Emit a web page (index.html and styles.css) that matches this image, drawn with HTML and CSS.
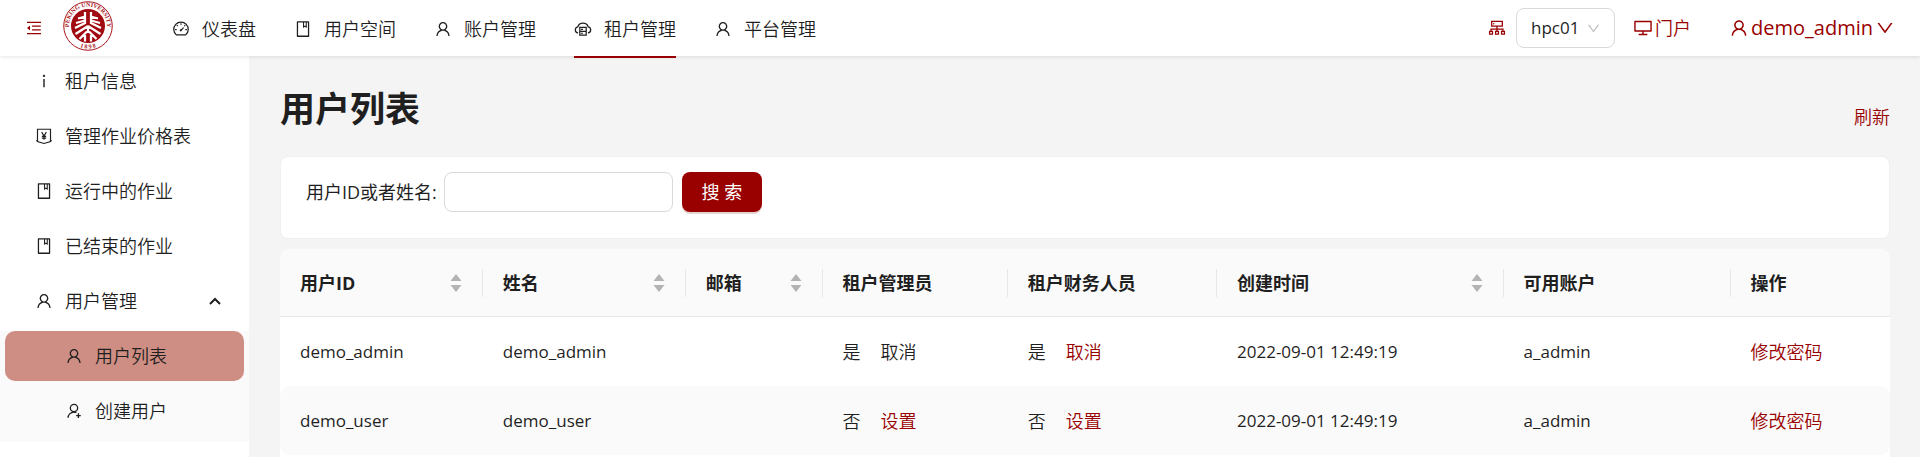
FILE: index.html
```html
<!DOCTYPE html>
<html lang="zh-CN">
<head>
<meta charset="utf-8">
<title>用户列表</title>
<link rel="stylesheet" href="styles.css">
</head>
<body>
<svg class="sprite" aria-hidden="true">
  <symbol id="user" viewBox="0 0 1024 1024"><path d="M858.500 763.600a374 374 0 00-80.600-119.500 375.630 375.630 0 00-119.500-80.600c-.4-.2-.8-.3-1.200-.5C719.500 518 760 444.700 760 362c0-137-111-248-248-248S264 225 264 362c0 82.700 40.500 156 102.800 201.100-.4.2-.8.3-1.200.5-44.800 18.900-85 46-119.500 80.600a375.630 375.630 0 00-80.600 119.500A371.700 371.700 0 00136 901.800a8 8 0 008 8.200h60c4.400 0 7.900-3.500 8-7.800 2-77.200 33-149.500 87.800-204.300 56.700-56.700 132-87.900 212.200-87.900s155.500 31.200 212.200 87.900C779 752.700 810 825 812 902.200c.1 4.400 3.600 7.800 8 7.800h60a8 8 0 008-8.200c-1-47.800-10.900-94.300-29.500-138.200zM512 534c-45.900 0-89.100-17.900-121.600-50.400S340 407.900 340 362c0-45.900 17.900-89.100 50.400-121.600S466.100 190 512 190s89.100 17.900 121.600 50.400S684 316.100 684 362c0 45.900-17.900 89.100-50.400 121.600S557.900 534 512 534z"/></symbol>
  <symbol id="user-add" viewBox="0 0 1024 1024"><g fill="none" stroke="currentColor" stroke-width="76"><circle cx="512" cy="342" r="208"/><path d="M174 900c4-160 130-328 338-328 50 0 96 10 138 28"/><path d="M764 640v264M632 772h264"/></g></symbol>
  <symbol id="book" viewBox="0 0 1024 1024"><path d="M832 64H192c-17.700 0-32 14.300-32 32v832c0 17.700 14.300 32 32 32h640c17.700 0 32-14.300 32-32V96c0-17.700-14.300-32-32-32zm-260 72h96v209.900L621.500 312 572 347.400V136zm220 752H232V136h280v296.900c0 3.300 1 6.600 3 9.300a15.900 15.900 0 0022.300 3.700l83.800-59.900 81.400 59.400c2.700 2 6 3.100 9.400 3.100 8.800 0 16-7.200 16-16V136h64v752z"/></symbol>
  <symbol id="down" viewBox="0 0 1024 1024"><path d="M884 256h-75c-5.100 0-9.900 2.500-12.900 6.600L512 654.200 227.900 262.600c-3-4.100-7.800-6.600-12.900-6.600h-75c-6.500 0-10.300 7.400-6.500 12.700l352.600 486.100c12.800 17.600 39 17.600 51.700 0l352.600-486.100c3.900-5.300.1-12.700-6.400-12.700z"/></symbol>
  <symbol id="desktop" viewBox="0 0 1024 1024"><path d="M928 140H96c-17.700 0-32 14.300-32 32v496c0 17.700 14.300 32 32 32h380v112H304c-8.800 0-16 7.200-16 16v48c0 4.400 3.600 8 8 8h432c4.400 0 8-3.600 8-8v-48c0-8.800-7.200-16-16-16H548V700h380c17.700 0 32-14.300 32-32V172c0-17.700-14.300-32-32-32zm-40 488H136V212h752v416z"/></symbol>
  <symbol id="fold" viewBox="0 0 1024 1024"><path d="M408 442h480c4.400 0 8-3.600 8-8v-56c0-4.400-3.600-8-8-8H408c-4.400 0-8 3.600-8 8v56c0 4.400 3.600 8 8 8zm-8 204c0 4.400 3.600 8 8 8h480c4.400 0 8-3.600 8-8v-56c0-4.400-3.600-8-8-8H408c-4.400 0-8 3.600-8 8v56zm504-486H120c-4.400 0-8 3.600-8 8v56c0 4.400 3.600 8 8 8h784c4.400 0 8-3.600 8-8v-56c0-4.400-3.600-8-8-8zm0 632H120c-4.400 0-8 3.600-8 8v56c0 4.400 3.600 8 8 8h784c4.400 0 8-3.600 8-8v-56c0-4.400-3.600-8-8-8zM115.400 518.900L271.700 642c5.800 4.600 14.400.5 14.400-6.900V388.900c0-7.400-8.500-11.500-14.400-6.900L115.400 505.100a8.740 8.740 0 000 13.800z"/></symbol>
  <symbol id="info" viewBox="0 0 1024 1024"><path d="M448 224a64 64 0 10128 0 64 64 0 10-128 0zm96 168h-64c-4.400 0-8 3.600-8 8v464c0 4.400 3.600 8 8 8h64c4.400 0 8-3.600 8-8V400c0-4.400-3.600-8-8-8z"/></symbol>
  <symbol id="dashboard" viewBox="0 0 1024 1024"><g fill="none" stroke="currentColor" stroke-width="72"><path d="M246 846A412 412 0 1 1 778 846z" stroke-linejoin="round"/><path d="M512 190v90M271 290l62 62M753 290l-62 62M176 548h90M758 548h90" stroke-width="60"/><path d="M500 590L660 432"/></g><circle cx="500" cy="590" r="62"/></symbol>
  <symbol id="cloud" viewBox="0 0 1024 1024"><g fill="none" stroke="currentColor" stroke-width="72"><path d="M230 728C140 716 76 646 76 562c0-84 54-150 136-166C256 270 370 180 512 180s256 90 300 216c82 16 136 82 136 166 0 84-64 154-154 166"/><path d="M330 420h364v444H330zM330 642h364"/></g><path d="M400 504h110v60H400zM400 726h110v60H400z"/></symbol>
  <symbol id="money" viewBox="0 0 1024 1024"><g fill="none" stroke="currentColor" stroke-width="66"><path d="M64 780h78V128h740v652h78"/><path d="M142 780v48l370 108 370-108v-48"/><path d="M380 290l132 230 132-230M512 520v210M390 530h244M390 630h244"/></g></symbol>
  <symbol id="cluster" viewBox="0 0 1024 1024"><g fill="none" stroke="currentColor" stroke-width="72"><path d="M210 136h604v270H210zM512 406v290M172 710V578h680v132"/><path d="M90 710h164v150H90zM430 710h164v150H430zM770 710h164v150H770z"/></g><circle cx="330" cy="271" r="40"/></symbol>
  <symbol id="sorter" viewBox="0 0 12 18"><path d="M6 0l5.500 7H.5zM6 18l5.500-7H.5z"/></symbol>
</svg>

<header class="topbar">
  <button class="icon-button" type="button" aria-label="收起菜单"><svg class="icon"><use href="#fold"/></svg></button>
  <a class="logo" href="#" aria-label="首页">
    <svg viewBox="0 0 100 100">
      <defs>
        <path id="arc-top" d="M16 66A38 38 0 1 1 84 66"/>
        <path id="arc-bottom" d="M18 82A46 46 0 0 0 82 82"/>
      </defs>
      <circle cx="50" cy="50" r="48.500" fill="#fff" stroke="#a8151b" stroke-width="2"/>
      <circle cx="50" cy="50" r="34" fill="#a00a10"/>
      <text class="seal-text"><textPath href="#arc-top" startOffset="50%">PEKING UNIVERSITY</textPath></text>
      <text class="seal-text"><textPath href="#arc-bottom" startOffset="50%">1 8 9 8</textPath></text>
      <g fill="none" stroke="#fff" stroke-width="4.500">
        <path d="M44 22v22L24 54M56 22v22l20 10M45 31L30 35M55 31l15 4M44 39L26 44M56 39l18 5"/>
        <path d="M50 50L25 66M50 50l25 16M50 59L33 76M50 59l17 17M50 50v14M44 68v13M56 68v13"/>
      </g>
    </svg>
  </a>
  <nav class="nav" aria-label="主导航">
    <a class="nav-item" href="#"><svg class="icon"><use href="#dashboard"/></svg>仪表盘</a>
    <a class="nav-item" href="#"><svg class="icon"><use href="#book"/></svg>用户空间</a>
    <a class="nav-item" href="#"><svg class="icon"><use href="#user"/></svg>账户管理</a>
    <a class="nav-item nav-item-active" href="#" aria-current="page"><svg class="icon"><use href="#cloud"/></svg>租户管理</a>
    <a class="nav-item" href="#"><svg class="icon"><use href="#user"/></svg>平台管理</a>
  </nav>
  <div class="tools">
    <svg class="icon"><use href="#cluster"/></svg>
    <div class="cluster-select">
      <select aria-label="集群"><option>hpc01</option></select>
      <svg class="select-arrow"><use href="#down"/></svg>
    </div>
    <a class="portal" href="#"><svg class="icon-large"><use href="#desktop"/></svg>门户</a>
    <button class="account" type="button"><svg class="icon-large"><use href="#user"/></svg>demo_admin<svg class="icon-large"><use href="#down"/></svg></button>
  </div>
</header>

<div class="layout">
  <nav class="sidebar" aria-label="租户管理">
    <a class="side-item" href="#"><svg class="icon"><use href="#info"/></svg>租户信息</a>
    <a class="side-item" href="#"><svg class="icon"><use href="#money"/></svg>管理作业价格表</a>
    <a class="side-item" href="#"><svg class="icon"><use href="#book"/></svg>运行中的作业</a>
    <a class="side-item" href="#"><svg class="icon"><use href="#book"/></svg>已结束的作业</a>
    <button class="side-item" type="button" aria-expanded="true"><svg class="icon"><use href="#user"/></svg>用户管理
      <svg class="chevron" viewBox="0 0 12 8"><path d="M1 7l5-5 5 5"/></svg></button>
    <div class="submenu">
      <a class="side-item side-item-active" href="#" aria-current="page"><svg class="icon"><use href="#user"/></svg>用户列表</a>
      <a class="side-item" href="#"><svg class="icon"><use href="#user-add"/></svg>创建用户</a>
    </div>
  </nav>

  <main class="content">
    <div class="title-row">
      <h1>用户列表</h1>
      <a class="link" href="#">刷新</a>
    </div>
    <form class="filter">
      <label for="keyword">用户ID或者姓名:</label>
      <input id="keyword" type="text">
      <button class="primary" type="button">搜 索</button>
    </form>
    <div class="table-card">
      <table>
        <colgroup>
          <col class="col-id"><col class="col-name"><col class="col-mail"><col class="col-admin">
          <col class="col-finance"><col class="col-time"><col class="col-account"><col class="col-action">
        </colgroup>
        <thead>
          <tr>
            <th><div class="head">用户ID<svg class="sorter"><use href="#sorter"/></svg></div></th>
            <th><div class="head">姓名<svg class="sorter"><use href="#sorter"/></svg></div></th>
            <th><div class="head">邮箱<svg class="sorter"><use href="#sorter"/></svg></div></th>
            <th><div class="head">租户管理员</div></th>
            <th><div class="head">租户财务人员</div></th>
            <th><div class="head">创建时间<svg class="sorter"><use href="#sorter"/></svg></div></th>
            <th><div class="head">可用账户</div></th>
            <th><div class="head">操作</div></th>
          </tr>
        </thead>
        <tbody>
          <tr>
            <td class="latin">demo_admin</td><td class="latin">demo_admin</td><td></td>
            <td><div class="role">是<span>取消</span></div></td>
            <td><div class="role">是<a class="link" href="#">取消</a></div></td>
            <td class="latin">2022-09-01 12:49:19</td><td class="latin">a_admin</td>
            <td><a class="link" href="#">修改密码</a></td>
          </tr>
          <tr>
            <td class="latin">demo_user</td><td class="latin">demo_user</td><td></td>
            <td><div class="role">否<a class="link" href="#">设置</a></div></td>
            <td><div class="role">否<a class="link" href="#">设置</a></div></td>
            <td class="latin">2022-09-01 12:49:19</td><td class="latin">a_admin</td>
            <td><a class="link" href="#">修改密码</a></td>
          </tr>
        </tbody>
      </table>
    </div>
  </main>
</div>
</body>
</html>
```
FILE: styles.css
```css
* { box-sizing: border-box; }

body {
  margin: 0;
  min-height: 100vh;
  display: flex;
  flex-direction: column;
  background: #f4f4f4;
  color: #1f1f1f;
  font-family: "Open Sans", "Noto Sans CJK SC", sans-serif;
  font-size: 18px;
  font-weight: 350;
  line-height: 28px;
}

a { color: inherit; text-decoration: none; }

button, input, select {
  font: inherit;
  color: inherit;
  border: 0;
  background: none;
  padding: 0;
}

.sprite { position: absolute; width: 0; height: 0; }

.icon, .icon-large { width: 18px; height: 18px; flex: none; fill: currentColor; }
.icon-large { width: 20px; height: 20px; }

.link, .icon-button, .tools { color: #900; }

/* Top bar */
.topbar {
  position: relative;
  display: flex;
  align-items: center;
  height: 56px;
  padding: 0 25px;
  background: #fff;
  box-shadow: 0 1px 4px rgba(0, 0, 0, .1);
}

.icon-button { display: flex; }
.logo { display: flex; margin: 0 59px 4px 20px; }
.logo svg { width: 50px; height: 50px; }

.seal-text {
  font-family: "Liberation Serif", serif;
  font-size: 12px;
  font-weight: 700;
  fill: #a8151b;
  text-anchor: middle;
}

.nav { display: flex; gap: 38px; height: 100%; }
.nav-item { display: flex; align-items: center; gap: 12px; padding-top: 2px; }
.nav-item-active { height: 58px; border-bottom: 2px solid #900; }

.tools { display: flex; align-items: center; margin-left: auto; }

.cluster-select { position: relative; margin: 0 18px 0 10px; color: #1f1f1f; }
.cluster-select select {
  appearance: none;
  width: 99px;
  height: 40px;
  padding-left: 14px;
  border: 1px solid #d9d9d9;
  border-radius: 8px;
  background: #fff;
  font-size: 17px;
  font-weight: 400;
}
.select-arrow {
  position: absolute;
  top: 13px;
  right: 14px;
  width: 15px;
  height: 15px;
  fill: #bfbfbf;
  pointer-events: none;
}

.portal { display: flex; align-items: center; gap: 2px; }
.account { display: flex; align-items: center; gap: 2px; margin-left: 38px; font-size: 20px; font-weight: 400; }

/* Sidebar */
.layout { display: flex; flex: 1; }

.sidebar { flex: none; width: 249px; background: #fff; }

.side-item {
  display: flex;
  align-items: center;
  gap: 12px;
  width: 239px;
  height: 50px;
  margin: 0 5px 5px;
  padding: 0 23px 0 30px;
  border-radius: 10px;
}
.submenu { background: #fafafa; padding-bottom: 1px; }
.submenu .side-item { padding-left: 60px; }
.submenu .side-item-active { background: #cf8e83; }

.chevron { width: 12px; height: 8px; margin-left: auto; fill: none; stroke: #1f1f1f; stroke-width: 2; }

/* Content */
.content {
  display: flex;
  flex: 1;
  flex-direction: column;
  min-width: 0;
  padding: 31px 30px 0 31px;
}

.title-row { display: flex; justify-content: space-between; align-items: flex-end; margin-bottom: 25px; }
h1 { margin: 0; font-size: 35px; font-weight: 700; line-height: 44px; }

.filter {
  display: flex;
  align-items: center;
  margin-bottom: 10px;
  padding: 15px 25px 26px;
  background: #fff;
  border: 1px solid #f0f0f0;
  border-radius: 8px;
}
.filter label { font-weight: 400; }
.filter input {
  width: 229px;
  height: 40px;
  margin: 0 9px 0 7px;
  padding: 0 14px;
  border: 1px solid #d9d9d9;
  border-radius: 8px;
  background: #fff;
}
.primary {
  width: 80px;
  height: 40px;
  border-radius: 8px;
  background: #900;
  box-shadow: 0 2px 0 rgba(120, 40, 20, .2);
  color: #fff;
  font-weight: 400;
}

.table-card { flex: 1; background: #fff; border-radius: 10px 10px 0 0; }

table { width: 100%; table-layout: fixed; border-collapse: separate; border-spacing: 0; }
.col-id, .col-name { width: 12.6%; }
.col-mail { width: 8.5%; }
.col-admin { width: 11.5%; }
.col-finance { width: 13%; }
.col-time { width: 17.8%; }
.col-account { width: 14.1%; }

th, td { height: 69px; padding: 0 20px; text-align: left; white-space: nowrap; }
th { height: 68px; padding-right: 0; background: #fafafa; border-bottom: 1px solid #e8e8e8; font-weight: 700; }
th:first-child { border-top-left-radius: 10px; }
th:last-child { border-top-right-radius: 10px; }

.head { display: flex; align-items: center; justify-content: space-between; padding-right: 20px; border-right: 1px solid #e8e8e8; }
th:last-child .head { border-right: 0; }
.sorter { width: 12px; height: 18px; fill: #b3b3b3; }

.latin { font-size: 17px; font-weight: 400; }

tbody tr:nth-child(even) td { background: #fafafa; }
tbody tr:nth-child(even) td:first-child { border-radius: 10px 0 0 10px; }
tbody tr:nth-child(even) td:last-child { border-radius: 0 10px 10px 0; }

.role { display: flex; gap: 20px; }
```
